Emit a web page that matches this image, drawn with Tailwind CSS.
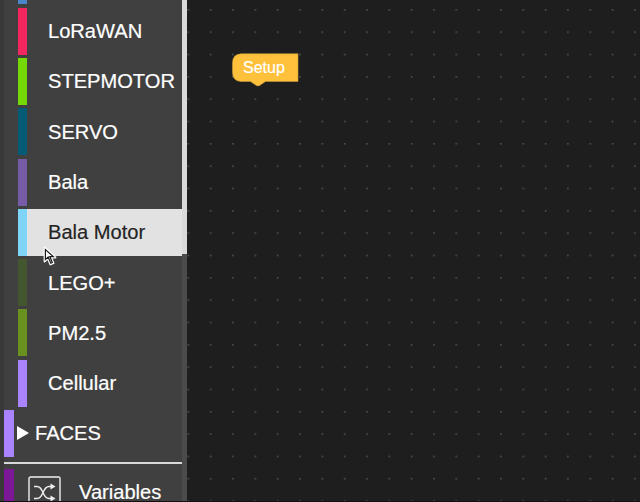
<!DOCTYPE html>
<html lang="en">
<head>
<meta charset="utf-8">
<title>Blocks</title>
<script src="https://cdn.jsdelivr.net/npm/@tailwindcss/browser@4"></script>
</head>
<body class="bg-[#1e1e1e] overflow-hidden">
<div class="relative flex w-[640px] h-[502px] overflow-hidden font-['Liberation_Sans',Arial,sans-serif] text-white">
  <aside class="flex w-[187px] h-full shrink-0 bg-[#404040]">
    <div class="w-[4px] h-full shrink-0 bg-[#393939]"></div>
    <nav class="flex flex-col w-[178px] shrink-0 overflow-hidden text-[20.1px] leading-[47px] whitespace-nowrap [-webkit-text-stroke:0.2px_currentColor]">
      <div class="ml-[14px] h-[4.4px] w-[9px] shrink-0 bg-[#4b86c9]"></div>
      <ul class="flex flex-col gap-[3.3px] pt-[3.3px] pl-[14px] shrink-0">
        <li class="flex h-[47px]"><span class="w-[9px] shrink-0 bg-[#f32660]"></span><span class="pl-[21px]">LoRaWAN</span></li>
        <li class="flex h-[47px]"><span class="w-[9px] shrink-0 bg-[#75d907]"></span><span class="pl-[21px]">STEPMOTOR</span></li>
        <li class="flex h-[47px]"><span class="w-[9px] shrink-0 bg-[#055a75]"></span><span class="pl-[21px] pt-px">SERVO</span></li>
        <li class="flex h-[47px]"><span class="w-[9px] shrink-0 bg-[#765ba7]"></span><span class="pl-[21px]">Bala</span></li>
        <li class="flex h-[47px] bg-[#e2e2e2] text-[#242424]"><span class="w-[9px] shrink-0 bg-[#80d4f7]"></span><span class="pl-[21px]">Bala Motor</span></li>
        <li class="flex h-[47px]"><span class="w-[9px] shrink-0 bg-[#445630]"></span><span class="pl-[21px] pt-px">LEGO+</span></li>
        <li class="flex h-[47px]"><span class="w-[9px] shrink-0 bg-[#6a9120]"></span><span class="pl-[21px] pt-px">PM2.5</span></li>
        <li class="flex h-[47px]"><span class="w-[9px] shrink-0 bg-[#aa83ff]"></span><span class="pl-[21px]">Cellular</span></li>
      </ul>
      <div class="flex items-center mt-[3.3px] h-[47px] shrink-0">
        <span class="w-[10px] h-full bg-[#aa83ff]"></span>
        <svg class="ml-[3px] -mt-[2px] w-[12px] h-[14px]" viewBox="0 0 12 14"><path d="M0 0L12 7L0 14Z" fill="#fff"/></svg>
        <span class="pl-[6px]">FACES</span>
      </div>
      <div class="mt-[5px] h-[1.5px] shrink-0 bg-[#d8d8d8]"></div>
      <div class="flex mt-[5.3px] h-[47px] shrink-0">
        <span class="w-[10px] shrink-0 bg-[#7c1796]"></span>
        <svg class="ml-[14px] mt-[7px] w-[34px] h-[34px] shrink-0" viewBox="0 0 34 34" fill="none" stroke="#eee" stroke-width="1.4">
          <rect x="1" y="1" width="31" height="31" rx="1.5"/>
          <path d="M6 10.500H9C16 10.500 14 22.500 21 22.500H25M6 22.500H9C16 22.500 14 10.500 21 10.500H25"/>
          <path d="M22.500 7.500L27.500 10.500L22.500 13.500ZM22.500 19.500L27.500 22.500L22.500 25.500Z" fill="#eee" stroke="none"/>
        </svg>
        <span class="pl-[17px]">Variables</span>
      </div>
    </nav>
    <div class="w-[5px] h-full shrink-0 bg-[#4b4b4b]"><div class="h-[254px] bg-[#dadada]"></div></div>
  </aside>
  <main class="relative flex-1 bg-[#1e1e1e]">
    <svg class="block w-[453px] h-[502px]">
      <defs><pattern id="grid" x="0.5" y="9" width="22.33" height="22.33" patternUnits="userSpaceOnUse"><rect x="0" y="0" width="1.6" height="1.6" fill="#505050"/></pattern></defs>
      <rect width="453" height="502" fill="url(#grid)"/>
    </svg>
    <div class="absolute left-[45px] top-[53px] w-[67px] h-[34px]">
      <svg class="absolute inset-0" width="67" height="34" viewBox="0 0 67 34"><path d="M9 .8H66V28.500H33.500L28 32.200Q26 33.600 24 32.200L18.500 28.500H9Q.5 28 .5 19.500V9.800Q.5 1.300 9 .8Z" fill="#ffc13b" stroke="#c99c3c" stroke-width=".6"/></svg>
      <span class="absolute left-[11px] top-[5px] text-[16px] leading-[20px] [-webkit-text-stroke:0.2px_currentColor]">Setup</span>
    </div>
  </main>
  <svg class="absolute left-[43px] top-[246px]" width="15" height="20" viewBox="0 0 15 20"><path d="M1.500 1.500V15.500L4.800 12.500L7.300 18.500L10.500 17.200L8.200 11.500H12.500Z" fill="#fff" stroke="#fff" stroke-width="1.800" stroke-linejoin="round"/><path d="M2.400 3.500V13.500L5.200 11L7.800 17.200L9.300 16.500L6.800 10.600H10.300Z" fill="#fff" stroke="#1a1a1a" stroke-width="1.200"/></svg>
  <div class="absolute left-0 bottom-0 w-full h-[1px] bg-[#111]"></div>
</div>
</body>
</html>
